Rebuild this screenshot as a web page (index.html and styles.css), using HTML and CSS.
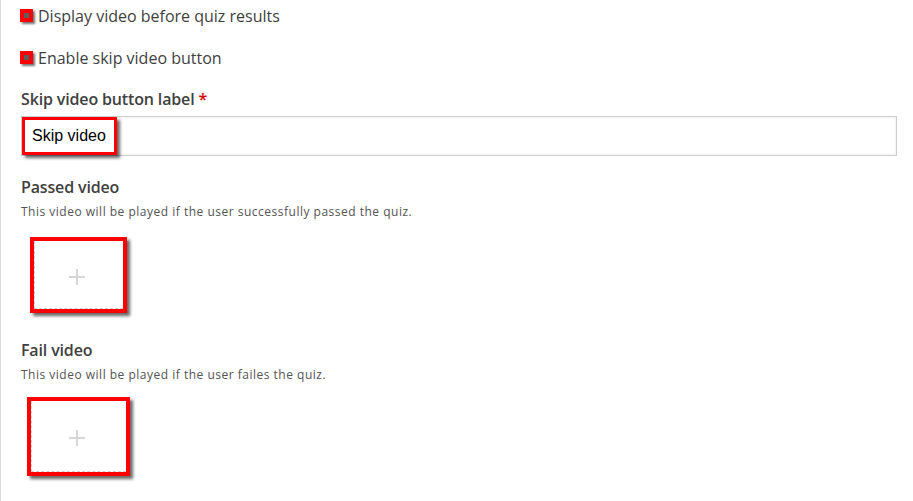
FILE: index.html
```html
<!DOCTYPE html>
<html lang="en">
<head>
    <meta charset="UTF-8">
    <title>Video settings</title>
    <link rel="stylesheet" href="styles.css">
</head>
<body>

    <div class="editor">
        <div class="check-field">
            <span class="check"></span>
            <label>Display video before quiz results</label>
        </div>
        <div class="check-field">
            <span class="check"></span>
            <label>Enable skip video button</label>
        </div>

        <div class="field-label">Skip video button label <span class="required">*</span></div>
        <div class="text-input">
            <span class="mark mark-input">Skip video</span>
        </div>

        <div class="field-label video-label">Passed video</div>
        <div class="field-desc">This video will be played if the user successfully passed the quiz.</div>
        <div class="mark upload upload-passed">
            <div class="upload-inner">
                <svg width="16" height="16" viewBox="0 0 16 16"><path d="M8 0v16M0 8h16" stroke="#d6d6d6" stroke-width="2"/></svg>
            </div>
        </div>

        <div class="field-label video-label fail-label">Fail video</div>
        <div class="field-desc">This video will be played if the user failes the quiz.</div>
        <div class="mark upload upload-fail">
            <div class="upload-inner">
                <svg width="16" height="16" viewBox="0 0 16 16"><path d="M8 0v16M0 8h16" stroke="#d6d6d6" stroke-width="2"/></svg>
            </div>
        </div>
    </div>

</body>
</html>
```

FILE: styles.css
```css
body {
    margin: 0;
    background-color: #fff;
    font-family: 'Open Sans', sans-serif;
    color: #3f3f40;
}
.editor {
    border-left: 1px solid #d9d9d9;
    min-height: 501px;
    box-sizing: border-box;
    padding: 5px 16px 0 20px;
}
.check-field {
    display: flex;
    align-items: center;
    height: 21px;
    margin-bottom: 21px;
    font-size: 16px;
}
.check {
    width: 13px;
    height: 13px;
    box-sizing: border-box;
    border: 4px solid #f00;
    background-color: #5e5e5e;
    box-shadow: 2px 2px 2px rgba(0, 0, 0, 0.55);
    margin: 0 5px 0 -1px;
}
.field-label {
    font-size: 16px;
    font-weight: 600;
    letter-spacing: -0.15px;
    line-height: 21px;
    color: #404040;
}
.required {
    color: #d00000;
}
.text-input {
    margin-top: 6px;
    height: 40px;
    box-sizing: border-box;
    border: 1px solid #cfcfcf;
    box-shadow: inset 0 0 3px #e6e6e6;
    background-color: #fff;
    display: flex;
}
.mark {
    border-style: solid;
    border-color: #f00;
    box-shadow: 3px 3px 3px rgba(0, 0, 0, 0.6);
    box-sizing: border-box;
}
.mark-input {
    border-width: 3px;
    width: 95px;
    height: 38px;
    padding: 0 0 0 7px;
    font-family: 'Liberation Sans', Arial, sans-serif;
    font-size: 16px;
    color: #000;
    line-height: 32px;
    background-color: #fff;
}
.video-label {
    margin-top: 21px;
}
.fail-label {
    margin-top: 27px;
}
.field-desc {
    font-size: 12px;
    letter-spacing: 0.5px;
    line-height: 17px;
    margin-top: 5px;
    color: #545454;
}
.upload {
    border-width: 4px;
    margin-top: 17px;
    background-color: #fff;
}
.upload-passed {
    width: 97px;
    height: 76px;
    margin-left: 9px;
}
.upload-fail {
    width: 103px;
    height: 79px;
    margin-left: 6px;
    margin-top: 14px;
}
.upload-inner {
    height: 100%;
    box-sizing: border-box;
    border-left: 1px dashed #d0d0d0;
    border-bottom: 1px dashed #d0d0d0;
    display: flex;
    align-items: center;
    justify-content: center;
    padding: 4px 4px 0 0;
}
```
